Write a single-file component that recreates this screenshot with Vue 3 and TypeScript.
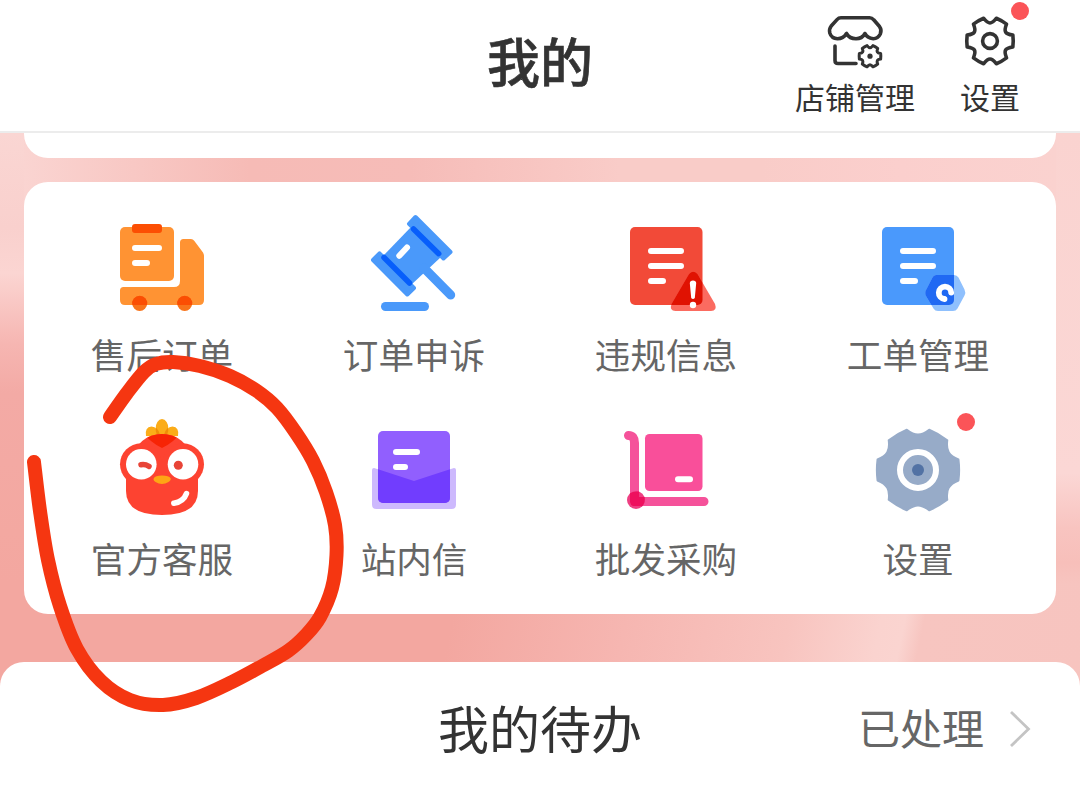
<script setup lang="ts">
type Point = [number, number]

interface Entry {
  id: string
  label: string
  box: string
  dot?: boolean
}

const entries: Entry[] = [
  { id: 'aftersale', label: '售后订单', box: '102 206 120 120' },
  { id: 'appeal', label: '订单申诉', box: '354 206 120 120' },
  { id: 'violation', label: '违规信息', box: '606 206 120 120' },
  { id: 'ticket', label: '工单管理', box: '858 206 120 120' },
  { id: 'service', label: '官方客服', box: '102 410 120 120' },
  { id: 'message', label: '站内信', box: '354 410 120 120' },
  { id: 'wholesale', label: '批发采购', box: '606 410 120 120' },
  { id: 'settings', label: '设置', box: '858 410 120 120', dot: true },
]

// Six-toothed gear outline around (cx, cy)
function gear(cx: number, cy: number, outer: number, ctrl: number, half = 14.5): string {
  const at = (r: number, deg: number): string => {
    const a = (deg * Math.PI) / 180
    return `${(cx + r * Math.cos(a)).toFixed(2)} ${(cy + r * Math.sin(a)).toFixed(2)}`
  }
  let d = `M${at(outer, -half)}`
  for (let k = 0; k < 6; k++) {
    const t = k * 60
    d += `Q${at(outer, t)} ${at(outer, t + half)}`
    d += `C${at(ctrl, t + 25)} ${at(ctrl, t + 35)} ${at(outer, t + 60 - half)}`
  }
  return d + 'Z'
}

// Smooth curve through a list of points
function smooth(p: Point[]): string {
  let d = `M${p[0][0]} ${p[0][1]}`
  for (let i = 0; i < p.length - 1; i++) {
    const a = p[Math.max(i - 1, 0)]
    const b = p[i]
    const c = p[i + 1]
    const e = p[Math.min(i + 2, p.length - 1)]
    d += `C${b[0] + (c[0] - a[0]) / 6} ${b[1] + (c[1] - a[1]) / 6} ${c[0] - (e[0] - b[0]) / 6} ${c[1] - (e[1] - b[1]) / 6} ${c[0]} ${c[1]}`
  }
  return d
}

const headerGear = gear(990, 41, 23.6, 16.5)
const shopGear = gear(870, 56.2, 11, 7.8)
const settingsGear = gear(918, 470, 41.8, 34)

const marker = smooth([
  [110, 417], [127, 393], [144, 372], [156, 364], [173, 362], [200, 366], [230, 376], [257, 391],
  [277, 408], [296, 433], [313, 461], [326, 492], [335, 525], [336.5, 555], [332, 588], [320, 617],
  [306, 635], [288, 651], [262, 666], [232, 682], [196, 698], [163, 705], [130, 700], [101, 681],
  [77, 649], [60, 606], [48, 560], [40, 511], [34, 462],
])
</script>

<template>
  <div class="page">
    <header class="header">
      <h1 class="title">我的</h1>
      <nav class="actions">
        <div class="action shop">
          <svg class="action-icon" viewBox="825 11 60 60">
            <g class="line">
              <path d="M841 17.700H869.500Q872 17.700 873.700 19.800L879.500 26.500Q882 30 880.300 34Q878 38.700 873.300 38.700Q867 38 865 33.500Q862 38.800 856 38.800Q849.500 38.800 846.500 33.500Q843.500 38.700 837.500 38.700Q831.500 38.500 829.800 33Q828.800 29.200 831.200 26L837 19.600Q838.700 17.700 841 17.700Z" />
              <path d="M835 46V60.500Q835 63.500 838 63.500H856" />
              <path :d="shopGear" stroke-width="3" />
            </g>
            <circle cx="870" cy="56.200" r="2.600" fill="#333" />
          </svg>
          <span>店铺管理</span>
        </div>
        <div class="action">
          <svg class="action-icon" viewBox="960 11 60 60">
            <g class="line">
              <path :d="headerGear" />
              <circle cx="990" cy="41" r="7.400" />
            </g>
          </svg>
          <span>设置</span>
          <i class="dot header-dot" />
        </div>
      </nav>
    </header>

    <main class="content">
      <section class="card previous" />

      <section class="card grid">
        <div v-for="item in entries" :key="item.id" class="cell">
          <svg class="cell-icon" :viewBox="item.box">
            <g v-if="item.id === 'aftersale'">
              <rect x="120" y="227" width="54" height="54" rx="5" fill="#ff9333" />
              <path d="M123.500 287H174Q180 287 180 281V242.500Q180 239 183.500 239H191Q193 239 194.200 240.700L203 252.500Q204 254 204 256V300Q204 305 199 305H125Q120 305 120 300V290.500Q120 287 123.500 287Z" fill="#ff9333" />
              <rect x="132" y="224" width="30" height="9" rx="3" fill="#fc4e03" />
              <path d="M135 248H159M135 263H147" class="dash" />
              <circle cx="139.700" cy="303.500" r="7.500" fill="#f8741b" />
              <circle cx="184.700" cy="303.500" r="7.500" fill="#f8741b" />
              <path d="M132.400 305A7.500 7.500 0 1 1 147 305ZM177.400 305A7.500 7.500 0 1 1 192 305Z" fill="#fb4e03" />
            </g>

            <g v-else-if="item.id === 'appeal'">
              <g fill="#4a99fa" stroke="#4a99fa" stroke-linejoin="round" stroke-width="4">
                <path d="M415.500 217L450.500 252L443.500 258.500L409 223.800Z" />
                <path d="M379.500 253.300L414 288L407.300 294.500L373 260Z" />
              </g>
              <path d="M412 226L441 257L411 285L384 255Z" fill="#4a99fa" />
              <path d="M424 268L450.700 295" stroke="#4a99fa" stroke-width="9" stroke-linecap="round" />
              <path d="M413.500 229L438.700 253.700M384 257.500L409.500 283" stroke="#075efb" stroke-width="5.500" stroke-linecap="round" />
              <path d="M399.300 255.700L407 247.500" class="dash" />
              <rect x="381" y="302" width="48" height="9" rx="4.500" fill="#4a99fa" />
            </g>

            <g v-else-if="item.id === 'violation'">
              <clipPath id="red-sheet"><rect x="630" y="227" width="72.500" height="78" rx="5" /></clipPath>
              <rect x="630" y="227" width="72.500" height="78" rx="5" fill="#f24a38" />
              <path d="M651 251H681M651 266H681M651 281H663" class="dash" />
              <path d="M689 274Q693.300 269.500 697.500 274L715 304Q717.500 310.700 711 311H675.500Q669 310.700 671.500 304Z" fill="#fb6b60" />
              <path d="M689 274Q693.300 269.500 697.500 274L715 304Q717.500 310.700 711 311H675.500Q669 310.700 671.500 304Z" fill="#e01202" clip-path="url(#red-sheet)" />
              <path d="M689.800 283Q690 280.500 693 280.500T696.200 283L694.800 298Q693 300 691.200 298Z" fill="#fff" />
              <circle cx="693" cy="305" r="3.200" fill="#fff" />
            </g>

            <g v-else-if="item.id === 'ticket'">
              <clipPath id="blue-sheet"><rect x="882" y="227" width="72" height="78" rx="5" /></clipPath>
              <rect x="882" y="227" width="72" height="78" rx="5" fill="#4a99fc" />
              <path d="M903 251H933M903 266H933M903 281H915" class="dash" />
              <path d="M936 275H954Q957 275 958.500 277.500L964.500 289.500Q966 292.500 964.500 295.500L957.500 308.500Q956 311 953 311H938Q935 311 933.500 308.500L926 296Q924.500 293 926 290L932.500 277.500Q933.500 275 936 275Z" fill="#8fc0fd" />
              <path d="M936 275H954Q957 275 958.500 277.500L964.500 289.500Q966 292.500 964.500 295.500L957.500 308.500Q956 311 953 311H938Q935 311 933.500 308.500L926 296Q924.500 293 926 290L932.500 277.500Q933.500 275 936 275Z" fill="#2069f3" clip-path="url(#blue-sheet)" />
              <path d="M951.200 292.600A6.200 6.200 0 1 0 944.500 299" fill="none" stroke="#fff" stroke-width="5.800" stroke-linecap="round" />
              <path d="M945.500 293.500L951 299" stroke="#2069f3" stroke-width="2.600" />
            </g>

            <g v-else-if="item.id === 'service'">
              <clipPath id="bird-head"><ellipse cx="162" cy="458" rx="28" ry="24" /></clipPath>
              <g fill="#fbac18">
                <path d="M146 436Q144.500 427 151.500 426.500Q158 427 160 437ZM178 436Q179.500 427 172.500 426.500Q166 427 164 437Z" />
                <ellipse cx="162" cy="429" rx="6.500" ry="10" />
              </g>
              <path d="M156 427.500Q159.500 431 160.500 436L157 435Q155 431 156 427.500ZM168 427.500Q164.500 431 163.500 436L167 435Q169 431 168 427.500Z" fill="#f08c08" />
              <g fill="#fd4331">
                <ellipse cx="162" cy="458" rx="28" ry="24" />
                <circle cx="141" cy="464.300" r="21" />
                <circle cx="183" cy="464.300" r="21" />
                <path d="M126 462H198V491Q198 515 162 515T126 491Z" />
              </g>
              <path d="M143 430H181Q178 440 162 448Q146 440 143 430Z" fill="#f72405" clip-path="url(#bird-head)" />
              <circle cx="141.300" cy="464.300" r="15.300" fill="#fff" />
              <circle cx="183" cy="464.300" r="15.300" fill="#fff" />
              <path d="M141 464.800Q145 464 149 466.300" fill="none" stroke="#e84437" stroke-width="5.500" stroke-linecap="round" />
              <circle cx="178.300" cy="465.300" r="4.500" fill="#e84437" />
              <path d="M154 478Q155 475.500 162 475.500T170.500 478Q171.500 480 168.500 482Q162 486 155.500 482Q152.500 480 154 478Z" fill="#fea515" />
              <path d="M173.800 503.300Q183.500 501.800 186.500 493.500" fill="none" stroke="#fff" stroke-width="5.500" stroke-linecap="round" />
            </g>

            <g v-else-if="item.id === 'message'">
              <clipPath id="letter"><rect x="378" y="431" width="72" height="72" rx="5" /></clipPath>
              <path d="M374 468L414 481L454 468Q456 468 456 470V504.500Q456 509 451.500 509H376.500Q372 509 372 504.500V470Q372 468 374 468Z" fill="#cdb9fd" />
              <rect x="378" y="431" width="72" height="72" rx="5" fill="#915ffe" />
              <path d="M374 468L414 481L454 468Q456 468 456 470V504.500Q456 509 451.500 509H376.500Q372 509 372 504.500V470Q372 468 374 468Z" fill="#713dfe" clip-path="url(#letter)" />
              <path d="M396 452H417M396 467H405" class="dash" />
            </g>

            <g v-else-if="item.id === 'wholesale'">
              <rect x="645" y="434" width="57.500" height="57" rx="4.500" fill="#f94f9a" />
              <path d="M678 479.200H690" class="dash" />
              <path d="M628.500 435.500Q634.500 435.500 634.500 443V501.500H704" fill="none" stroke="#f5529a" stroke-width="9" stroke-linecap="round" />
              <circle cx="636" cy="500" r="9" fill="#ee3f82" />
              <path d="M630 493.300Q633 491 639 491.500V497H644.600Q645.500 502 642.500 506H633Q630.500 505 630 502Z" fill="#ee105e" />
            </g>

            <g v-else>
              <path :d="settingsGear" fill="#97abc8" stroke="#97abc8" stroke-width="2" stroke-linejoin="round" />
              <circle cx="918" cy="470" r="18" fill="none" stroke="#fff" stroke-width="6" />
              <circle cx="918" cy="470" r="6" fill="#5272a4" />
            </g>
          </svg>
          <span class="cell-label">{{ item.label }}</span>
          <i v-if="item.dot" class="dot cell-dot" />
        </div>
      </section>

      <section class="todo">
        <h2 class="todo-title">我的待办</h2>
        <div class="todo-more">
          <span>已处理</span>
          <svg class="chevron" viewBox="0 0 24 40"><path d="M3 3L20.500 20L3 37" /></svg>
        </div>
      </section>
    </main>

    <svg class="marker" viewBox="0 0 1080 791"><path :d="marker" /></svg>
  </div>
</template>

<style>
body {
  margin: 0;
}
</style>

<style scoped>
.page {
  position: relative;
  display: flex;
  flex-direction: column;
  width: 1080px;
  height: 791px;
  overflow: hidden;
  background: #fff;
  color: #333;
  font-family: "Noto Sans CJK SC", "Noto Sans", sans-serif;
}
.header {
  display: grid;
  grid-template-columns: 1fr auto 1fr;
  box-sizing: border-box;
  height: 133px;
  flex: none;
  border-bottom: 2px solid #ececec;
  background: #fff;
}
.title {
  grid-column: 2;
  margin: 0;
  font-size: 53px;
  line-height: 121px;
  font-weight: 500;
  -webkit-text-stroke: 0.6px #333;
}
.actions {
  display: flex;
  justify-content: flex-end;
  gap: 45px;
  padding-right: 60px;
}
.action {
  position: relative;
  display: flex;
  flex-direction: column;
  align-items: center;
  padding-top: 11px;
  font-size: 30px;
  line-height: 51px;
  white-space: nowrap;
}
.action-icon {
  width: 60px;
  height: 60px;
  flex: none;
}
.line {
  fill: none;
  stroke: #333;
  stroke-width: 3.6;
  stroke-linejoin: round;
  stroke-linecap: round;
}
.dot {
  position: absolute;
  width: 18px;
  height: 18px;
  border-radius: 50%;
  background: #fb5458;
}
.header-dot {
  top: 2px;
  right: -9px;
}
.content {
  display: flex;
  flex-direction: column;
  flex: 1;
  background:
    linear-gradient(180deg, #fad6d3 0, #f9d0cd 95px, #fbd5d2 140px, #f6b6b2 210px, #f3aaa5 260px, #f3a8a1 400px, #f3a7a0 450px) 0 0 / 24px 450px no-repeat,
    linear-gradient(180deg, #fad3d0 0, #fbd7d5 340px, #f8c4c0 395px, #f7bfba 430px, #f7c4bf 450px) 1056px 0 / 24px 450px no-repeat,
    linear-gradient(90deg, #fad4d1 24px, #f6bbb6 250px, #f6bcb8 410px, #f9ccc8 620px, #f9ccc8 760px, #fbcfcd 900px, #fad2cf 1056px) 0 0 / 1080px 80px no-repeat,
    linear-gradient(102deg, #f3a7a0 0, #f3a7a0 450px, #f6b6b1 620px, #f8c4bf 780px, #fad3cf 870px, #fad4d0 893px, #f7c5c0 912px, #f7c4bf 1080px) 0 450px / 1080px 100px no-repeat,
    #f6bcb8;
}
.card {
  margin: 0 24px;
  background: #fff;
}
.previous {
  height: 25px;
  flex: none;
  border-radius: 0 0 24px 24px;
}
.grid {
  display: grid;
  grid-template-columns: repeat(4, 252px);
  grid-auto-rows: 204px;
  margin-top: 24px;
  padding: 12px;
  border-radius: 24px;
}
.cell {
  position: relative;
  display: flex;
  flex-direction: column;
  align-items: center;
  padding-top: 12px;
}
.cell-icon {
  width: 120px;
  height: 120px;
  flex: none;
}
.cell-label {
  font-size: 35.6px;
  line-height: 55px;
  color: #666;
  white-space: nowrap;
}
.cell-dot {
  top: 15px;
  right: 69px;
}
.dash {
  fill: none;
  stroke: #fff;
  stroke-width: 6;
  stroke-linecap: round;
}
.todo {
  display: grid;
  grid-template-columns: 1fr auto 1fr;
  align-items: center;
  flex: 1;
  margin-top: 48px;
  padding: 0 48px;
  border-radius: 24px 24px 0 0;
  background: #fff;
}
.todo-title {
  grid-column: 2;
  margin: 0;
  font-size: 51px;
  line-height: 72px;
  font-weight: 400;
}
.todo-more {
  display: flex;
  align-items: center;
  justify-content: flex-end;
  gap: 24px;
  font-size: 42px;
  line-height: 60px;
  color: #666;
}
.chevron {
  width: 24px;
  height: 40px;
  margin-top: 4px;
}
.chevron path {
  fill: none;
  stroke: #c4c4c4;
  stroke-width: 2.8;
}
.marker {
  position: absolute;
  inset: 0;
  width: 1080px;
  height: 791px;
  pointer-events: none;
}
.marker path {
  fill: none;
  stroke: #f53611;
  stroke-width: 14;
  stroke-linecap: round;
  stroke-linejoin: round;
}
</style>
